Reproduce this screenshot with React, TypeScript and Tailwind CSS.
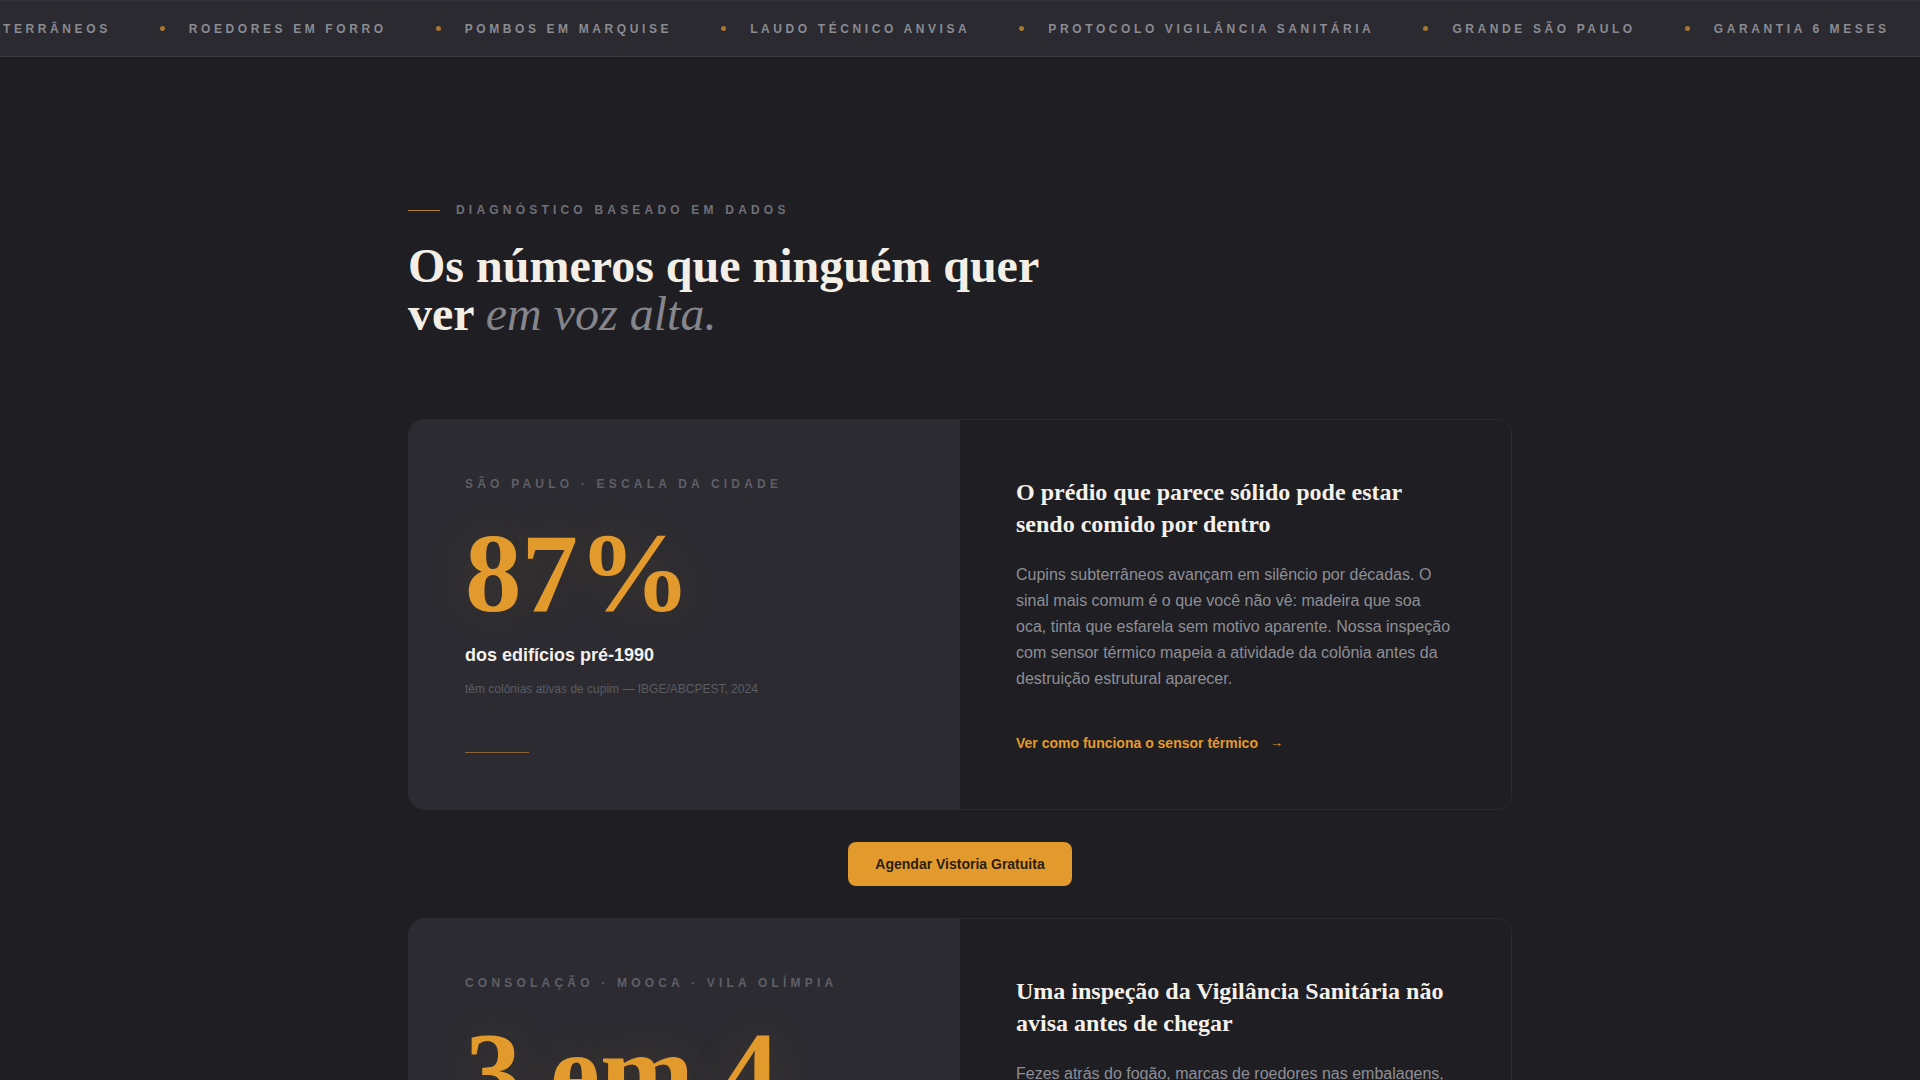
import React from "react";

const SANS = { fontFamily: '"Liberation Sans", Arial, sans-serif' };
const SERIF = { fontFamily: '"Liberation Serif", "Times New Roman", serif' };

const tickerItems = [
  "CUPINS SUBTERRÂNEOS",
  "ROEDORES EM FORRO",
  "POMBOS EM MARQUISE",
  "LAUDO TÉCNICO ANVISA",
  "PROTOCOLO VIGILÂNCIA SANITÁRIA",
  "GRANDE SÃO PAULO",
  "GARANTIA 6 MESES",
  "CUPINS SUBTERRÂNEOS",
  "ROEDORES EM FORRO",
];

function Ticker() {
  return (
    <div className="h-[57px] bg-[#2a2a30] border-t border-t-[#303036] border-b border-b-[#3a3a40] overflow-hidden flex items-center">
      <div className="flex items-center gap-[49px] whitespace-nowrap -translate-x-[136px]">
        {tickerItems.map((t, i) => (
          <div key={i} className="flex items-center gap-6 shrink-0">
            <span className="w-[5px] h-[5px] rounded-full bg-[#a8772f]" />
            <span className="text-[12px] leading-4 font-bold tracking-[0.3em] text-[#8b8b92]">{t}</span>
          </div>
        ))}
      </div>
    </div>
  );
}

type Stat = {
  label: string;
  value: string;
  sub: string;
  source: string;
  title: string;
  body: string;
  link: string;
};

function StatCard({ s }: { s: Stat }) {
  return (
    <div className="grid grid-cols-2 rounded-2xl border border-[#2c2c32] overflow-hidden">
      <div className="bg-[#2b2b31] p-14 flex flex-col">
        <div className="text-[12px] leading-4 font-bold tracking-[0.35em] text-[#5f5f67]">{s.label}</div>
        <div
          style={SERIF}
          className="mt-6 text-[113px] leading-none font-bold text-[#e39a2d] [text-shadow:0_0_48px_rgba(227,154,45,0.14)]"
        >
          {s.value}
        </div>
        <div className="mt-3 text-[18px] leading-7 font-bold text-[#f4f1ec]">{s.sub}</div>
        <div className="mt-3 text-[12px] leading-4 text-[#5c5c63]">{s.source}</div>
        <div className="mt-auto pt-10">
          <div className="w-16 h-px bg-[#8a6636]" />
        </div>
      </div>
      <div className="bg-[#1e1e23] p-14">
        <h3 style={SERIF} className="text-[24px] leading-8 font-bold text-[#f5f1ea]">
          {s.title}
        </h3>
        <p className="mt-[22px] text-[16px] leading-[26px] text-[#8e8e95]">{s.body}</p>
        <a className="mt-[41px] flex items-center gap-3 text-[14px] leading-5 font-bold text-[#e39a2d]">
          <span>{s.link}</span>
          <span className="text-[13px]">→</span>
        </a>
      </div>
    </div>
  );
}

const stats: Stat[] = [
  {
    label: "SÃO PAULO · ESCALA DA CIDADE",
    value: "87%",
    sub: "dos edifícios pré-1990",
    source: "têm colônias ativas de cupim — IBGE/ABCPEST, 2024",
    title: "O prédio que parece sólido pode estar sendo comido por dentro",
    body:
      "Cupins subterrâneos avançam em silêncio por décadas. O sinal mais comum é o que você não vê: madeira que soa oca, tinta que esfarela sem motivo aparente. Nossa inspeção com sensor térmico mapeia a atividade da colônia antes da destruição estrutural aparecer.",
    link: "Ver como funciona o sensor térmico",
  },
  {
    label: "CONSOLAÇÃO · MOOCA · VILA OLÍMPIA",
    value: "3 em 4",
    sub: "cozinhas comerciais autuadas",
    source: "tinham sinais de roedores — COVISA, 2023",
    title: "Uma inspeção da Vigilância Sanitária não avisa antes de chegar",
    body:
      "Fezes atrás do fogão, marcas de roedores nas embalagens, ralos sem proteção. Um único indício basta para interditar o estabelecimento. Nosso protocolo cobre cada ponto que o fiscal verifica, com laudo técnico pronto para apresentar.",
    link: "Ver o protocolo completo",
  },
];

export default function App() {
  return (
    <div style={SANS} className="min-h-screen bg-[#1e1e23] antialiased">
      <Ticker />
      <section className="max-w-6xl mx-auto px-6 pt-[145px] pb-32">
        <div className="flex items-center gap-4">
          <span className="w-8 h-px bg-[#b5812f]" />
          <span className="text-[12px] leading-4 font-bold tracking-[0.35em] text-[#6f6f77]">
            DIAGNÓSTICO BASEADO EM DADOS
          </span>
        </div>
        <h2 style={SERIF} className="mt-6 max-w-2xl text-[48px] leading-[48px] font-bold text-[#f4efe6]">
          Os números que ninguém quer ver{" "}
          <em className="font-normal text-[#85858b]">em voz alta.</em>
        </h2>

        <div className="mt-[81px]">
          <StatCard s={stats[0]} />
          <div className="flex justify-center my-8">
            <button className="bg-[#e39a2d] text-[#2a1f12] text-[14px] leading-5 font-bold px-[27px] py-3 rounded-lg">
              Agendar Vistoria Gratuita
            </button>
          </div>
          <StatCard s={stats[1]} />
        </div>
      </section>
    </div>
  );
}
